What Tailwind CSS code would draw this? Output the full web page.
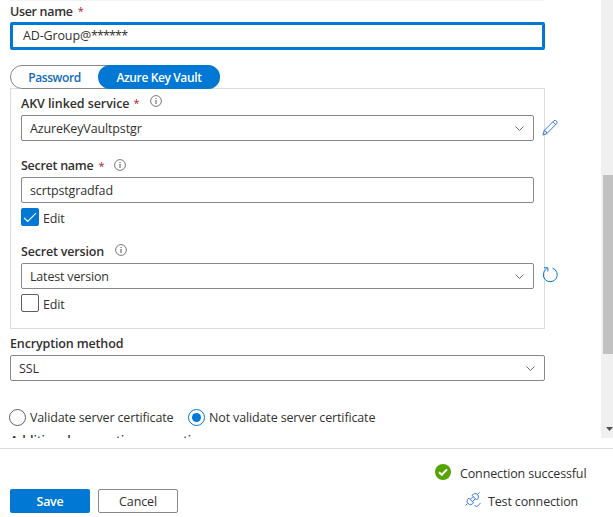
<!DOCTYPE html>
<html lang="en"><head><meta charset="utf-8"><title>Linked service</title>
<script src="https://cdn.jsdelivr.net/npm/@tailwindcss/browser@4"></script></head>
<body class="w-[613px] h-[517px] overflow-hidden bg-white font-['Open_Sans','Noto_Sans',sans-serif] text-[12.5px] leading-4 tracking-[-0.14px] text-[#323130] whitespace-nowrap">
<div class="flex h-[438px] overflow-hidden">
 <main class="w-[601px] pl-[10px]">
  <div class="w-[535px] h-px bg-[#f3f3f3]"></div>
  <label class="flex h-[21px] items-center font-semibold tracking-[-0.32px]">User name<span class="ml-[5px] -mt-px text-[11px] font-normal text-[#a4262c]">*</span></label>
  <div class="w-[535px] h-7 border-3 border-[#0078d4] rounded-[2px] pl-[10px] flex items-center pb-px"><span>AD-Group@<span class="tracking-[-0.85px]">******</span></span></div>
  <div class="mt-[15px] w-[210px] h-[24px] relative z-10 bg-white rounded-full border border-[#8a8886] flex text-[12px] font-semibold text-[#0f6cbd]">
   <div class="w-[87px] pt-px flex items-center justify-center tracking-[-0.42px]">Password</div>
   <div class="-my-px -mr-px w-[122px] pt-px rounded-full bg-[#0078d4] text-white flex items-center justify-center tracking-[-0.38px]">Azure Key Vault</div>
  </div>
  <section class="-mt-px w-[535px] h-[241px] border border-[#dcdcdc] pl-[10px]">
   <label class="flex h-[26px] items-center pt-[3px] font-semibold"><span class="tracking-[-0.08px]">AKV linked service</span><span class="ml-1 -mt-px text-[11px] font-normal text-[#a4262c]">*</span>
    <svg class="ml-[11px] -mt-[5px]" width="12" height="12" viewBox="0 0 12 12"><circle cx="6" cy="6" r="5.4" fill="none" stroke="#555" stroke-width=".8"/><path d="M6 5v4M6 3v1" stroke="#555"/></svg></label>
   <div class="flex items-center">
    <div class="w-[513px] shrink-0 h-[26px] border border-[#8a8886] rounded-[2px] pl-2 pr-[9px] flex items-center justify-between"><span class="pt-px">AzureKeyVaultpstgr</span><svg width="9" height="5" viewBox="0 0 9 5" fill="none" stroke="#605e5c" stroke-width=".9"><path d="M.5.5l4 4 4-4"/></svg></div>
    <svg class="ml-2 -mt-[2px] shrink-0" width="17" height="17" viewBox="0 0 18 18" fill="none" stroke="#2874d8"><path d="M1 17l1.300-4.800L12.700 1.800q1.200-1 2.600.3 1.400 1.500.2 2.800L5.200 15.400 1 17zM2.300 12.200q2.500.3 2.900 3.200M11.600 3l3 3"/></svg>
   </div>
   <label class="mt-[14px] flex h-[22px] items-center font-semibold"><span class="tracking-[-0.27px]">Secret name</span><span class="ml-[5px] -mt-px text-[11px] font-normal text-[#a4262c]">*</span>
    <svg class="ml-[10px] -mt-[3px]" width="12" height="12" viewBox="0 0 12 12"><circle cx="6" cy="6" r="5.4" fill="none" stroke="#555" stroke-width=".8"/><path d="M6 5v4M6 3v1" stroke="#555"/></svg></label>
   <div class="w-[513px] h-[26px] border border-[#8a8886] rounded-[2px] pl-2 pt-px flex items-center">scrtpstgradfad</div>
   <div class="mt-[5px] h-[18px] flex items-center"><span class="w-[18px] h-[18px] bg-[#0078d4] rounded-[2px]"><svg width="18" height="18" viewBox="0 0 18 18" fill="none" stroke="white" stroke-width="1.2"><path d="M3 9.800l3.700 3.700L15 5.200"/></svg></span><span class="ml-1 pt-[3px]">Edit</span></div>
   <label class="mt-[14px] flex h-[23px] items-center font-semibold"><span class="tracking-[-0.18px]">Secret version</span>
    <svg class="ml-[11px] -mt-[3px]" width="12" height="12" viewBox="0 0 12 12"><circle cx="6" cy="6" r="5.4" fill="none" stroke="#555" stroke-width=".8"/><path d="M6 5v4M6 3v1" stroke="#555"/></svg></label>
   <div class="flex items-center">
    <div class="w-[513px] shrink-0 h-[26px] border border-[#8a8886] rounded-[2px] pl-2 pr-[9px] flex items-center justify-between"><span class="pt-px tracking-[-0.18px]">Latest version</span><svg width="9" height="5" viewBox="0 0 9 5" fill="none" stroke="#605e5c" stroke-width=".9"><path d="M.5.5l4 4 4-4"/></svg></div>
    <svg class="ml-2 -mt-[3px] shrink-0" width="17" height="17" viewBox="0 0 17 17" fill="none" stroke="#0078d4"><path d="M10.500 2.100A7 7 0 1 1 4.700 2.700M2 1.800h3.900v3.700"/></svg>
   </div>
   <div class="mt-[5px] h-[18px] flex items-center"><span class="w-[18px] h-[18px] border border-[#605e5c] rounded-[2px]"></span><span class="ml-1 pt-[3px]">Edit</span></div>
  </section>
  <label class="flex h-[26px] items-center pt-[3px] font-semibold">Encryption method</label>
  <div class="w-[535px] h-[26px] border border-[#8a8886] rounded-[2px] pl-2 pr-[9px] flex items-center justify-between"><span class="pt-px">SSL</span><svg width="9" height="5" viewBox="0 0 9 5" fill="none" stroke="#605e5c" stroke-width=".9"><path d="M.5.5l4 4 4-4"/></svg></div>
  <div class="mt-[28px] -ml-px h-[17px] flex items-center"><span class="w-[17px] h-[17px] rounded-full border border-[#605e5c]"></span><span class="ml-1 w-[158px]">Validate server certificate</span><span class="w-[17px] h-[17px] rounded-full border border-[#0078d4] flex items-center justify-center"><span class="w-[9px] h-[9px] rounded-full bg-[#0078d4]"></span></span><span class="ml-1">Not validate server certificate</span></div>
  <div class="mt-[7px] font-semibold">Additional connection properties</div>
 </main>
 <aside class="w-3 bg-[#f0f0f0] pl-[2px] pt-[175px]"><div class="h-[179px] bg-[#c1c1c1]"></div><svg class="mt-[73px] ml-[3px]" width="7" height="4" viewBox="0 0 7 4"><path d="M0 0h7L3.500 4z" fill="#505050"/></svg></aside>
</div>
<footer class="mt-[10px] h-[69px] border-t border-[#dcdcdc] pl-[10px] flex justify-between">
 <div class="pt-[40px] flex gap-2"><button class="w-20 h-6 pt-px rounded-[2px] bg-[#0078d4] text-white font-semibold tracking-[-0.3px]">Save</button><button class="w-20 h-6 pt-px rounded-[2px] border border-[#8a8886]">Cancel</button></div>
 <div class="w-[178px] pt-[15px]">
  <div class="flex items-center h-4"><svg width="16" height="16" viewBox="0 0 16 16"><circle cx="8" cy="8" r="8" fill="#57a300"/><path d="M4 8.200l2.800 2.600L12 5.400" fill="none" stroke="white" stroke-width="2"/></svg><span class="ml-[9px] pt-[3px]">Connection successful</span></div>
  <div class="mt-[12px] flex items-center h-4"><svg class="ml-[30px]" width="16" height="16" viewBox="0 0 16 16" fill="none" stroke="#2874d8" stroke-width=".95"><path d="M.5 13.500l2-2M12.500 2.400L14.500.4M7 3.400l4.600 4.600c2-1.600 2.600-3.600 1-5.400-1.800-1.700-3.900-1.100-5.600.8zM3.800 6.100l4.800 4.800c-2 2-3.900 2.300-5.500.6C1.400 9.800 1.900 7.900 3.800 6.100zM5.200 7.500l2.800-2.800M7.400 9.700l2.800-2.800M9.700 13l1.800 2 4-4"/></svg><span class="ml-[7px] pt-[3px]">Test connection</span></div>
 </div>
</footer>
</body></html>
